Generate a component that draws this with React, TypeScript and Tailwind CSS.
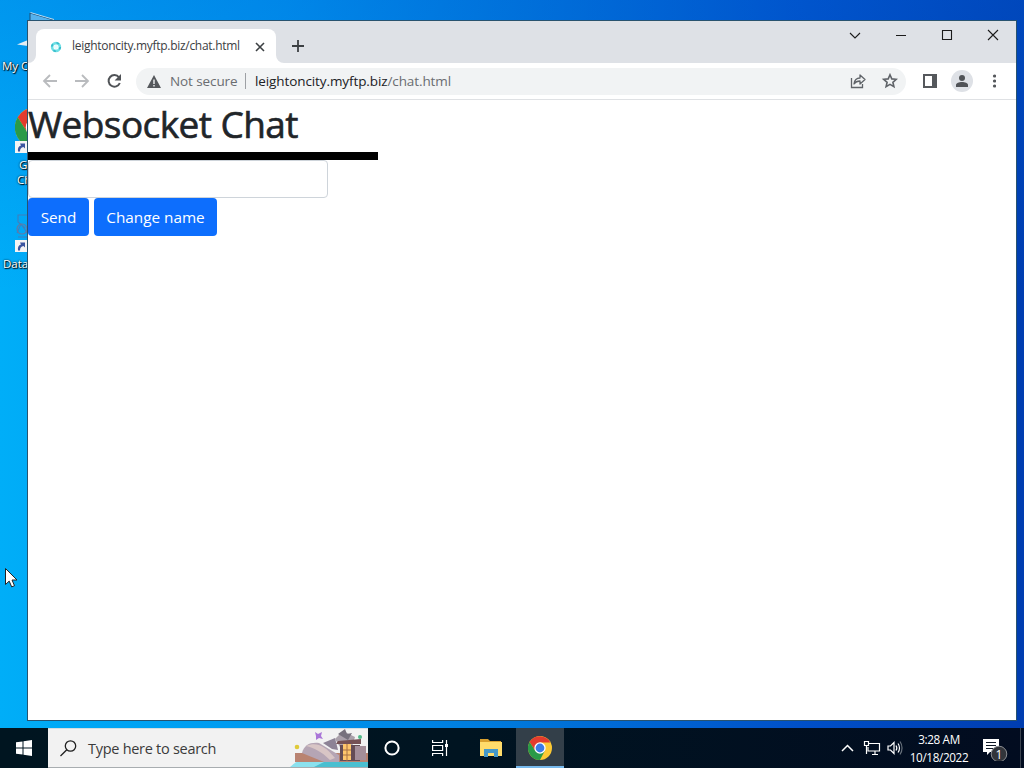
import { ReactNode } from "react";

const desktopLabel =
  "absolute whitespace-nowrap text-[11.5px] leading-[15px] text-white [text-shadow:1px_1px_1px_#000,0_0_2px_#000]";

function ShortcutArrow({ className }: { className: string }) {
  return (
    <svg className={className} width="12" height="12" viewBox="0 0 12 12">
      <path d="M0 0h12v12H0z" fill="#f4f4f4" />
      <path d="M3 10.500C2.500 7 3.500 5 6 4.500L5 2.500h5v5L8.500 6C6 6.500 5 8 5 10.500z" fill="#3a55a0" />
    </svg>
  );
}

function ChromeLogo({ size }: { size: number }) {
  return (
    <svg width={size} height={size} viewBox="0 0 24 24">
      <circle cx="12" cy="12" r="12" fill="#fcc934" />
      <path d="M1.600 6A12 12 0 0 1 22.400 6.500H12L7.200 14.800z" fill="#e33b2e" />
      <path d="M1.600 6 7.200 14.800 16.800 14.800 12 24A12 12 0 0 1 1.600 6z" fill="#2a9a48" />
      <circle cx="12" cy="12" r="5.700" fill="#fff" />
      <circle cx="12" cy="12" r="4.400" fill="#3c7be8" />
    </svg>
  );
}

function DesktopIcons() {
  return (
    <div className="absolute left-0 top-0 h-[300px] w-[120px]">
      <svg className="absolute left-0 top-0" width="60" height="60" viewBox="0 0 60 60">
        <path d="M30 22V13L54 20z" fill="#55b2ee" stroke="#1c4e74" />
        <path d="M30.500 12.500 54 19.500" stroke="#b9dcf3" />
        <path d="M17 44.500 28 40v6z" fill="#e4edf3" />
      </svg>
      <span className={`${desktopLabel} left-[2px] top-[58px]`}>My Computer</span>
      <div className="absolute left-[15px] top-[107px]">
        <ChromeLogo size={41} />
      </div>
      <ShortcutArrow className="absolute left-[15px] top-[141px]" />
      <span className={`${desktopLabel} left-[19px] top-[157px]`}>Google</span>
      <span className={`${desktopLabel} left-[17px] top-[172px]`}>Chrome</span>
      <svg className="absolute left-[15px] top-[213px]" width="24" height="26" viewBox="0 0 24 26" fill="none" stroke="#3f7fbd" strokeWidth="1.100">
        <path d="M12 2H3v7l7 6M2 20l4-9 7 10M3 24h9" />
        <circle cx="7" cy="16" r="5" stroke="#6877a0" />
      </svg>
      <ShortcutArrow className="absolute left-[15px] top-[240px]" />
      <span className={`${desktopLabel} left-[3px] top-[256px]`}>Database</span>
    </div>
  );
}

function TabStrip() {
  return (
    <div className="flex h-[41px] shrink-0 items-end bg-[#dee1e6]">
      <svg width="8" height="8" viewBox="0 0 8 8">
        <path d="M8 0v8H0a8 8 0 0 0 8-8z" fill="#fff" />
      </svg>
      <div className="flex h-[34px] w-[240px] items-center rounded-t-lg bg-white">
        <svg className="ml-3.5 mt-0.5" width="12" height="12" viewBox="0 0 12 12" fill="none">
          <circle cx="6" cy="6" r="3.900" stroke="#6fe0e6" strokeWidth="2.600" />
          <circle cx="6" cy="6" r="4.200" stroke="#35b8c8" strokeWidth="1.600" strokeDasharray="2.500 4.100" />
          <circle cx="6" cy="6" r="2" fill="#e9fbfc" />
        </svg>
        <span className="ml-2.5 w-[176px] whitespace-nowrap text-[12px] tracking-[-0.290px] text-[#3c4043]">
          leightoncity.myftp.biz/chat.html
        </span>
        <svg className="ml-[7px] mt-0.5" width="10" height="10" viewBox="0 0 10 10" stroke="#3c4043" strokeWidth="1.600">
          <path d="m1 1 8 8M9 1 1 9" />
        </svg>
      </div>
      <svg width="8" height="8" viewBox="0 0 8 8">
        <path d="M0 0v8h8a8 8 0 0 1-8-8z" fill="#fff" />
      </svg>
      <svg className="mb-[11px] ml-2" width="12" height="12" viewBox="0 0 12 12" stroke="#3c4043" strokeWidth="1.800">
        <path d="M6 0v12M0 6h12" />
      </svg>
      <div className="ml-auto flex h-full items-start pr-4 pt-[7px]">
        <svg width="152" height="12" viewBox="0 0 152 12" fill="none" stroke="#1b1b1b" strokeWidth="1.100">
          <path d="m2 4 5 5 5-5" />
          <path d="M48 6.500h10" shapeRendering="crispEdges" />
          <path d="M94.500 1.500h9v9h-9z" />
          <path d="m140 1 10 10M150 1l-10 10" />
        </svg>
      </div>
    </div>
  );
}

function Toolbar() {
  return (
    <div className="flex h-[37px] shrink-0 items-center border-b border-[#dfe1e4] bg-white">
      <svg className="ml-3.5 shrink-0" width="80" height="16" viewBox="0 0 80 16" fill="none" strokeWidth="1.800">
        <path d="M15 8H2M8 2 2 8l6 6M33 8h13M40 2l6 6-6 6" stroke="#b9bbbe" />
        <path d="M77 4.300A5.800 5.800 0 1 0 77.800 10" stroke="#505357" strokeWidth="2" />
        <path d="M79 1v6.400h-6.400z" fill="#505357" />
      </svg>
      <div className="ml-3.5 flex h-[27px] w-[770px] items-center rounded-full bg-[#f1f3f4]">
        <svg className="ml-[11px] shrink-0" width="14" height="13" viewBox="0 0 14 13">
          <path d="M7 0l7 13H0z" fill="#55585c" />
          <path d="M7 4.500V9M7 10v1.600" stroke="#f1f3f4" strokeWidth="1.400" />
        </svg>
        <span className="ml-[9px] w-[68px] whitespace-nowrap text-[13.500px] tracking-[-0.100px] text-[#6a6d71]">
          Not secure
        </span>
        <span className="ml-[7px] h-4 w-px bg-[#9da0a4]" />
        <span className="ml-[9px] whitespace-nowrap text-[13.500px] tracking-[-0.100px] text-[#202124]">
          leightoncity.myftp.biz<span className="text-[#6a6d71]">/chat.html</span>
        </span>
        <svg className="ml-auto mr-2" width="48" height="16" viewBox="0 0 48 16" fill="none" stroke="#5f6368" strokeWidth="1.300">
          <path d="M1.500 5v9.500h11V11" />
          <path d="M4 11c.5-4 2.500-6 6-6V2l5 4.500-5 4.500V8c-2.500 0-4.500.8-6 3z" strokeLinejoin="round" />
          <path d="m40 1.800 1.800 4.100 4.500.4-3.400 3 1 4.400L40 11.400l-3.900 2.300 1-4.400-3.400-3 4.500-.4z" strokeWidth="1.600" />
        </svg>
      </div>
      <svg className="ml-[17px]" width="14" height="14" viewBox="0 0 14 14">
        <path d="M1 1h12v12H1z" fill="none" stroke="#55585c" strokeWidth="2" />
        <path d="M9 0h5v14H9z" fill="#55585c" />
      </svg>
      <svg className="ml-3.5" width="22" height="22" viewBox="0 0 22 22">
        <circle cx="11" cy="11" r="11" fill="#dee1e6" />
        <circle cx="11" cy="8" r="3" fill="#505357" />
        <path d="M5 17v-2c0-2 3-3 6-3s6 1 6 3v2z" fill="#505357" />
      </svg>
      <svg className="ml-[19px]" width="4" height="14" viewBox="0 0 4 14" fill="#55585c">
        <circle cx="2.500" cy="2" r="1.600" />
        <circle cx="2.500" cy="7" r="1.600" />
        <circle cx="2.500" cy="12" r="1.600" />
      </svg>
    </div>
  );
}

function PrimaryButton({ className, children }: { className: string; children: ReactNode }) {
  return (
    <button className={`h-[38px] whitespace-nowrap rounded bg-[#0d6efd] text-center text-white ${className}`}>
      {children}
    </button>
  );
}

function ChatPage() {
  return (
    <main className="flex-1 bg-white">
      <h1 className="h-[52px] whitespace-nowrap text-[37px] font-medium leading-[48px] tracking-[-0.580px] text-[#212529] [-webkit-text-stroke:0.6px_#212529]">
        Websocket Chat
      </h1>
      <div className="h-2 w-[350px] bg-black" />
      <input
        aria-label="Message"
        className="block h-[38px] w-[300px] rounded border border-[#ced4da] bg-white px-3 text-base outline-none"
      />
      <div className="flex gap-[5px]">
        <PrimaryButton className="w-[61px] text-[15.300px]">Send</PrimaryButton>
        <PrimaryButton className="w-[123px] text-[15.300px]">Change name</PrimaryButton>
      </div>
    </main>
  );
}

function SearchArt() {
  return (
    <svg width="78" height="38" viewBox="0 0 78 38">
      <path d="M0 38c5-4 6-6 14-7h64v7z" fill="#8be1ee" />
      <path d="M24 38l10-5h44v5z" fill="#4abfd0" />
      <path d="M5 24h73v9H5z" fill="#b98371" />
      <path d="M12 24c2-8 8-11 17-10l20 12v7H34z" fill="#b5a5b4" />
      <path d="M16 17c9-4 18-2 29 12l-5 2C31 22 24 19 16 17z" fill="#d8c5c5" />
      <path d="M33 14l12-5 3 12-6-1z" fill="#8d8396" />
      <path d="M45 10l8-8 12 6-3 10H50z" fill="#aaa0aa" />
      <path d="M48 5l7-5 2 5 5-1-4 7z" fill="#77717d" />
      <path d="M48 12l23-2v5H46z" fill="#755155" />
      <path d="M50 16h20v16H50z" fill="#654c55" />
      <path d="M53 15h8v16h-8z" fill="#ffc66c" />
      <path d="M57 15v17M53 21h8M53 26h8" stroke="#a87045" />
      <path d="M65 17h11v14H65z" fill="#a48e99" />
      <path d="M25 3l3 2 4-2-1 4 2 3-4-1-3 2v-4z" fill="#aa76d8" />
      <circle cx="7" cy="18" r="2.300" fill="#dfca3a" />
      <circle cx="70" cy="8" r="2" fill="#51b988" />
    </svg>
  );
}

function Taskbar() {
  return (
    <footer className="flex h-10 shrink-0 bg-[linear-gradient(90deg,#001520,#001421_45%,#020c20)] text-white">
      <div className="flex w-12 items-center justify-center">
        <svg width="16" height="16" viewBox="0 0 16 16" fill="#fff">
          <path d="M0 2.300 6.500 1.400V7.500H0zM7.500 1.300 16 0v7.500H7.500zM0 8.500h6.500v6.100L0 13.700zM7.500 8.500H16V16l-8.500-1.300z" />
        </svg>
      </div>
      <div className="flex w-80 items-center border-b border-t border-b-[#a8adb0] border-t-[#d6dde0] bg-[#f2f2f2]">
        <svg className="ml-3" width="17" height="17" viewBox="0 0 17 17" fill="none" stroke="#202020" strokeWidth="1.300">
          <circle cx="10.500" cy="6" r="5.200" />
          <path d="M6.800 9.700.5 16" />
        </svg>
        <span className="ml-[11px] mt-0.5 whitespace-nowrap text-[14.500px] tracking-[-0.280px] text-[#3b3b3b]">
          Type here to search
        </span>
        <div className="ml-auto h-[38px]">
          <SearchArt />
        </div>
      </div>
      <div className="flex w-12 items-center justify-center">
        <svg width="16" height="16" viewBox="0 0 16 16">
          <circle cx="8" cy="8" r="6.600" fill="none" stroke="#fff" strokeWidth="2" />
        </svg>
      </div>
      <div className="flex w-12 items-center justify-center">
        <svg width="16" height="16" viewBox="0 0 16 16" fill="none" stroke="#fff" strokeWidth="1.200">
          <path d="M.6 0v2.500h10V0M.6 16v-2.500h10V16M.6 5.500h10v5H.6zM14.500 0v16" />
          <path d="M13 4h3v3h-3z" fill="#fff" stroke="none" />
        </svg>
      </div>
      <div className="flex w-[52px] items-center justify-center pl-0.5">
        <svg width="22" height="18" viewBox="0 0 22 18">
          <path d="M0 0h8l2 2h11v3H0z" fill="#d8a02e" />
          <path d="M0 3h22v14H0z" fill="#ffdc6b" />
          <path d="M4 10h14v8h-4v-4H8v4H4z" fill="#4598c8" />
        </svg>
      </div>
      <div className="flex w-12 items-center justify-center border-b-2 border-[#76b9ed] bg-[#333f49] pt-0.5">
        <ChromeLogo size={24} />
      </div>
      <div className="ml-auto flex items-center">
        <svg width="62" height="16" viewBox="0 0 62 16" fill="none" stroke="#fff" strokeWidth="1.200">
          <path d="m1 11 5.500-5.500L12 11" strokeWidth="1.500" />
          <path d="M28 3.500h10.500v7.500H27V7M31 14.500h6M34 11v3.500" />
          <path d="M23.500 1.500h4v4h-4zM25.500 5.500v8.500" />
          <path d="M47 6h2.500L53 2.500v11L49.500 10H47z" />
          <path d="M55 5.500c1 1.500 1 3.500 0 5M57 3.500c2 2.500 2 6.500 0 9" />
          <path d="M59 1.500c2.700 3.800 2.700 9.200 0 13" stroke="#68717b" />
        </svg>
        <div className="ml-1 w-[64px] whitespace-nowrap text-center text-[11.700px] leading-[18px] tracking-[-0.350px]">
          <div>3:28 AM</div>
          <div>10/18/2022</div>
        </div>
        <svg className="ml-3" width="26" height="26" viewBox="0 0 26 26">
          <path d="M0 4h16v13H7l-3 3v-3H0z" fill="#fff" />
          <path d="M3 7.500h10M3 10.500h10M3 13.500h7" stroke="#101a28" strokeWidth="1.100" />
          <circle cx="16" cy="19" r="7.800" fill="#32353b" stroke="#8a8d92" />
          <text x="16" y="23.500" textAnchor="middle" fontSize="12" fill="#fff">
            1
          </text>
        </svg>
        <span className="ml-[11px] mr-[3px] h-10 w-px bg-[#3b4350]" />
      </div>
    </footer>
  );
}

export default function App() {
  return (
    <div className="relative flex h-[768px] w-[1024px] flex-col overflow-hidden bg-[linear-gradient(90deg,#00aef8,#0097ef_28%,#0078dc_50%,#0050c8_78%,#003db0)] font-['Open_Sans','Noto_Sans',sans-serif]">
      <div className="relative flex-1 bg-[linear-gradient(180deg,#0060d84d,#0060d800_40%)]">
        <DesktopIcons />
        <div className="absolute left-[27px] top-[20px] flex h-[701px] w-[990px] flex-col border border-[#28536f]">
          <div className="h-px shrink-0 bg-[#dee1e6]" />
          <TabStrip />
          <Toolbar />
          <ChatPage />
        </div>
        <svg className="absolute left-[5px] top-[568px]" width="13" height="20" viewBox="0 0 13 20">
          <path d="M.5.5v16l3.700-3.400 2.500 5.800 2.800-1.200L7 12h5z" fill="#fff" stroke="#222" />
        </svg>
      </div>
      <Taskbar />
    </div>
  );
}
